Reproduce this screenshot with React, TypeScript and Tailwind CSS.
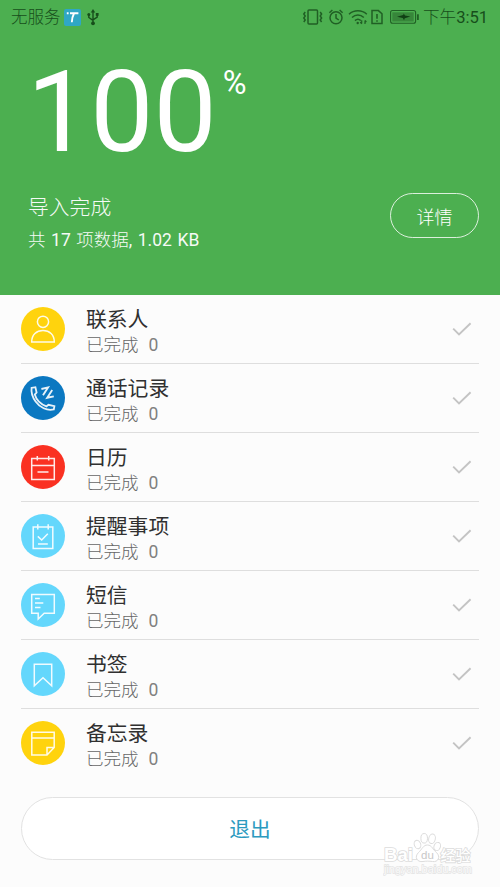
import React from "react";

type Item = { title: string; color: string; icon: React.ReactNode };

const items: Item[] = [
  {
    title: "联系人",
    color: "bg-[#ffd30d]",
    icon: (
      <>
        <circle cx="22" cy="14.8" r="5.6" />
        <path d="M10.7 35C10.7 27.5 15.5 23.6 22 23.6S33.3 27.5 33.3 35Z" />
      </>
    ),
  },
  {
    title: "通话记录",
    color: "bg-[#0b78c1]",
    icon: (
      <>
        <path strokeWidth="1.8" d="M10.6 11.8 14.4 11.2 15.6 16.6 13.8 18.6C15.2 23.6 20 28.4 25.4 30.4L27.4 28.8 33.4 30.2 32.8 33.4C26 35 18.6 31.4 14.6 25.6 11.4 21 10 16 10.6 11.8Z" />
        <path strokeWidth="1.9" d="M20.4 13 27 11.4 22 19.2M31.2 14 26.2 21.8 32.8 20.4" />
      </>
    ),
  },
  {
    title: "日历",
    color: "bg-[#fa3122]",
    icon: (
      <path d="M10.7 13.5H33.3V34.5H10.7ZM10.7 20.5H33.3M16.3 11V15.6M27.7 11V15.6M16.5 27H27.5" />
    ),
  },
  {
    title: "提醒事项",
    color: "bg-[#64d7fc]",
    icon: (
      <path d="M12.2 13H31.8V34.6H12.2ZM16.8 10.2V15.6M27.2 10.2V15.6M16.8 22.4 20.7 26 26.8 19.8M17 30H26.8" />
    ),
  },
  {
    title: "短信",
    color: "bg-[#64d7fc]",
    icon: (
      <>
        <path d="M10.7 11.5H33.3V30.3H23.2L17.2 36V30.3H10.7Z" />
        <path d="M14 15.6H18.8M14 20H22.3M14 24.5H19.5" />
      </>
    ),
  },
  {
    title: "书签",
    color: "bg-[#64d7fc]",
    icon: <path d="M13.3 12.3H30.7V33.8L22 25.7 13.3 33.8Z" />,
  },
  {
    title: "备忘录",
    color: "bg-[#ffd30d]",
    icon: (
      <path d="M10.8 11.3H33.2V26.5L26 34H10.8ZM10.8 17H33.2M26 34V26.5H33.2" />
    ),
  },
];

function StatusBar() {
  return (
    <div className="flex h-[35px] shrink-0 items-center pl-[11px] pr-[11px] text-[16.5px] font-light leading-[35px] text-[#174e1b]">
      <span>无服务</span>
      <svg className="ml-[3px] h-[17px] w-[17px]" viewBox="0 0 17 17">
        <rect width="17" height="17" rx="2" fill="#2fa7c5" />
        <path d="M2.8 4.3H4.6M6 4.3H14.4M10 4.5C8.6 7 8 9.5 7.8 13.2" fill="none" stroke="#fff" strokeWidth="1.9" />
      </svg>
      <svg className="-mt-px ml-[6px] h-[17px] w-[12px]" viewBox="0 0 12 17" fill="none" stroke="#174e1b" strokeWidth="1.4">
        <path d="M6 2V14M1.8 6V8.5L6 11.4M10.2 5.5V8.2L6 10.8" />
        <path d="M6 0 8.2 3.6H3.8Z" fill="#174e1b" stroke="none" />
        <circle cx="6" cy="14.3" r="1.9" fill="#174e1b" stroke="none" />
        <circle cx="1.8" cy="5.6" r="1.5" fill="#174e1b" stroke="none" />
        <path d="M8.8 4h2.8v2.8H8.8z" fill="#174e1b" stroke="none" />
      </svg>
      <div className="ml-auto flex items-center">
        <svg className="-mt-px h-[18px] w-[117px]" viewBox="0 0 117 18" fill="none" stroke="#205f24" strokeWidth="1.5">
          <rect x="6" y="2" width="9.5" height="14" rx="1" />
          <path d="M3.2 4 1.8 6 3.2 8 1.8 10 3.2 12 1.8 14M18.2 4 19.6 6 18.2 8 19.6 10 18.2 12 19.6 14" />
          <circle cx="34" cy="9.7" r="6" />
          <path d="M34 6V10L36.8 12M27.4 4.8 30.4 2M40.6 4.8 37.6 2" />
          <path d="M47 6.2C52 1.6 59.8 1.6 64.8 6.2M50 9.5C53.4 6.2 58.4 6.2 61.8 9.5M53 12.6C54.8 10.8 57 10.8 58.8 12.6" />
          <circle cx="55.7" cy="15" r="1.2" fill="#205f24" stroke="none" />
          <path d="M59.7 12.2V15.5M58.2 14.2 59.7 15.8M63 16V12.6M64.4 14 63 12.4" strokeWidth="1.2" />
          <path d="M70 2.6H76.4L80 5.8V15.6H70Z" />
          <path d="M75 6V10.8M75 12.2V13.8" strokeWidth="1.6" />
          <rect x="88.6" y="2.5" width="25" height="12.8" rx="2" strokeWidth="1.1" />
          <rect x="90.3" y="4.3" width="21.4" height="9.2" fill="#37863a" stroke="none" />
          <path d="M95 8.8 101.2 7 101.7 5.5 103 7.6 108.4 8.6 102.8 10.2 102 12.2 100.8 10Z" fill="#103f14" stroke="none" />
          <path d="M115.9 6.2V12" strokeWidth="1.8" />
        </svg>
        <span className="ml-[4px] w-[66px] whitespace-nowrap text-[16.6px] font-normal">
          <span className="font-light">下午</span>3:51
        </span>
      </div>
    </div>
  );
}

function Row({ item, last }: { item: Item; last: boolean }) {
  return (
    <li
      className={
        "flex h-[69px] items-center border-b " +
        (last ? "border-transparent" : "border-[#dedede]")
      }
    >
      <div className={"h-11 w-11 shrink-0 rounded-full " + item.color}>
        <svg viewBox="0 0 44 44" className="h-11 w-11" fill="none" stroke="#fff" strokeOpacity="0.9" strokeWidth="1.5">
          {item.icon}
        </svg>
      </div>
      <div className="ml-[21px] flex-1 pt-[7px]">
        <div className="text-[20.8px] leading-[26px] text-[#303030]">{item.title}</div>
        <div className="flex gap-[10px] text-[17.5px] font-light leading-[25px] text-[#666666]">
          <span>已完成</span>
          <span className="font-normal text-[#808080]">0</span>
        </div>
      </div>
      <svg viewBox="0 0 20 14" className="mr-[7px] h-[14px] w-[20px]" fill="none" stroke="#c4c4c4" strokeWidth="1.9">
        <path d="M1.2 6.6 7 12.4 18.6 1.2" />
      </svg>
    </li>
  );
}

function Watermark() {
  return (
    <div className="absolute left-[383px] top-[832px] h-[46px] w-[92px]">
      <svg viewBox="0 0 92 46" className="h-[46px] w-[92px]" fontFamily="'Liberation Sans','Noto Sans CJK SC',sans-serif">
        <g fill="#fff" stroke="#dcdcdc" strokeWidth="1">
          <ellipse cx="34.5" cy="12.5" rx="3.2" ry="4.3" transform="rotate(-20 34.5 12.5)" />
          <ellipse cx="41.2" cy="6.3" rx="3.3" ry="4.8" />
          <ellipse cx="49" cy="6.8" rx="3.3" ry="4.8" transform="rotate(12 49 6.8)" />
          <ellipse cx="54.2" cy="14.5" rx="3.2" ry="4.2" transform="rotate(20 54.2 14.5)" />
          <path d="M44.5 13C49 13 50 18 53.5 20.5 58 25 55 30.5 49.5 29.5 46 29 43 29 40 29.5 34 30.5 31 25 35.5 20.5 39 17.5 40 13 44.5 13Z" />
        </g>
        <g fill="#fff" stroke="#dcdcdc" strokeWidth="1.6" style={{ paintOrder: "stroke" }}>
          <text x="1" y="29" fontSize="18.5" fontWeight="700" textLength="29" lengthAdjust="spacingAndGlyphs">Bai</text>
          <text x="57.5" y="28.5" fontSize="15" fontWeight="500" textLength="30">经验</text>
        </g>
        <text x="38" y="27" fontSize="11.5" textLength="13" fill="#c8c8c8">du</text>
        <text x="1" y="41" fontSize="11" textLength="88" fill="#fafafa" stroke="#e3e3e3" strokeWidth="1.3" style={{ paintOrder: "stroke" }}>jingyan.baidu.com</text>
      </svg>
    </div>
  );
}

export default function App() {
  return (
    <div className="relative flex h-[887px] w-[500px] flex-col overflow-hidden bg-[#fcfcfc] font-[Roboto,'Noto_Sans_CJK_SC',sans-serif]">
      <header className="flex h-[295px] flex-col bg-[#4caf50] text-white">
        <StatusBar />
        <div className="flex h-[152px] items-start pl-[27px]">
          <span className="mt-[22px] text-[112.5px] leading-[112px]">100</span>
          <span className="ml-[6px] mt-[30px] text-[32.5px] leading-[36px]">%</span>
        </div>
        <div className="flex items-start justify-between pl-7 pr-[21px]">
          <div className="opacity-95">
            <div className="mt-[5px] text-[20.8px] font-light leading-[32px]">导入完成</div>
            <div className="text-[17.5px] leading-[32px] [word-spacing:1.2px]">
              <span className="font-light">共</span> 17 <span className="font-light">项数据</span>, 1.02 KB
            </div>
          </div>
          <button className="mt-[6px] h-[45px] w-[89px] rounded-full border border-white/80 pt-[3px] text-[18px] font-light">
            详情
          </button>
        </div>
      </header>
      <ul className="mx-[21px]">
        {items.map((item, i) => (
          <Row key={item.title} item={item} last={i === items.length - 1} />
        ))}
      </ul>
      <button className="mx-[21px] mt-[19px] h-[63px] shrink-0 rounded-full border border-[#e2e2e2] bg-white pt-[4px] text-[20.7px] text-[#2c9abf]">
        退出
      </button>
      <Watermark />
    </div>
  );
}
